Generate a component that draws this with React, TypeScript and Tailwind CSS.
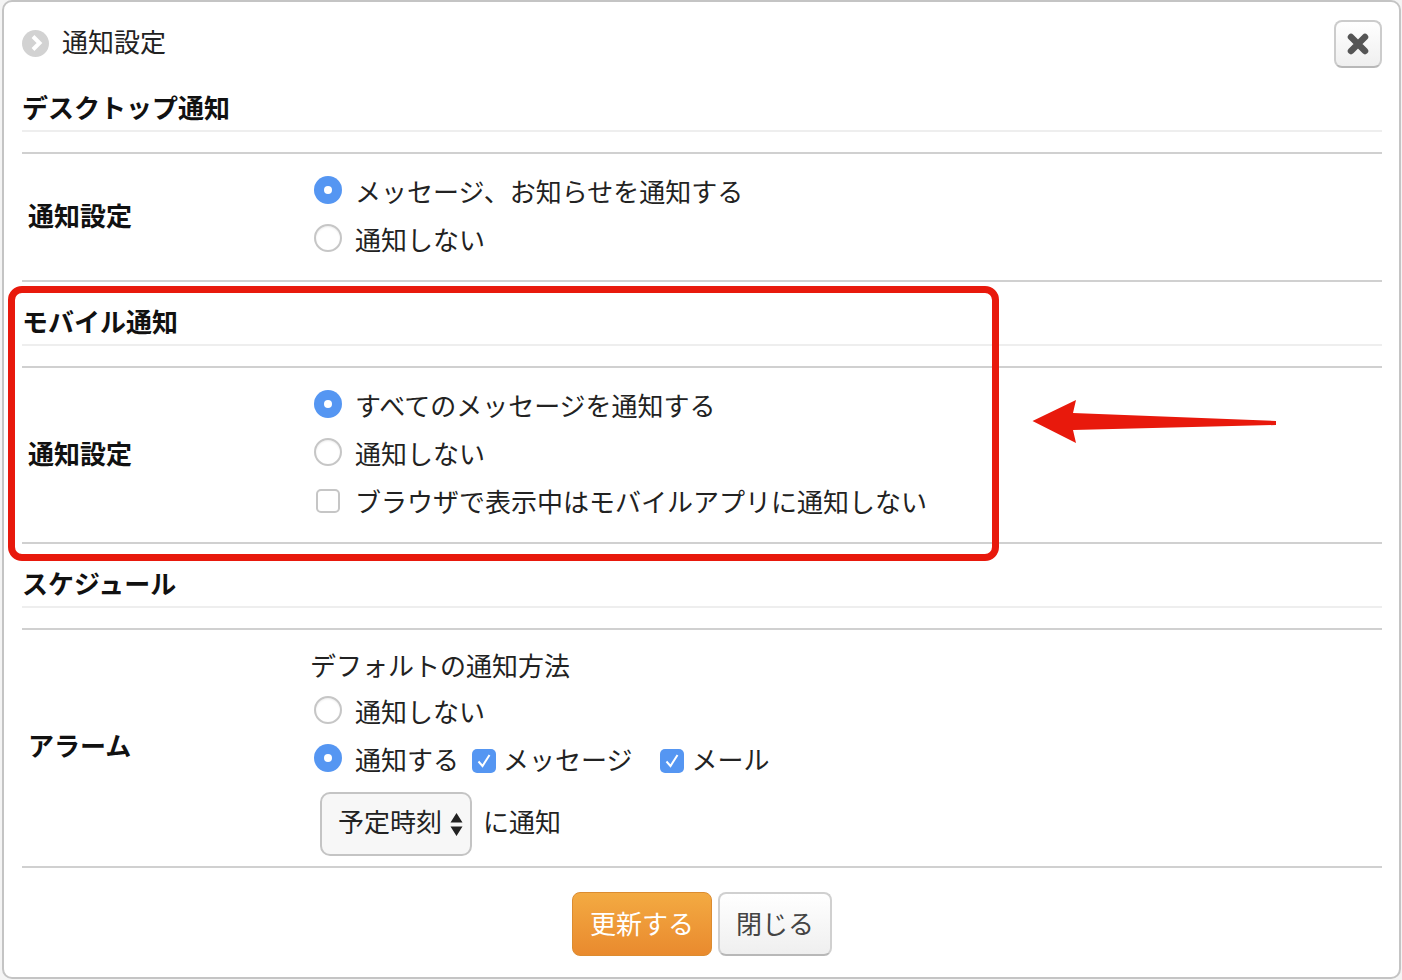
import React from 'react';

const Radio = ({ checked }: { checked?: boolean }) => (
  <span
    className={`flex h-[28px] w-[28px] shrink-0 -translate-y-[1px] items-center justify-center rounded-full ${
      checked
        ? 'bg-[#5596f2]'
        : 'border-2 border-[#c6c6c6] bg-white shadow-[inset_0_1px_2px_rgba(0,0,0,0.08)]'
    }`}
  >
    {checked && <span className="h-[8px] w-[8px] rounded-full bg-white" />}
  </span>
);

const Checkbox = ({ checked }: { checked?: boolean }) => (
  <span
    className={`flex h-[24px] w-[24px] shrink-0 items-center justify-center rounded-[5px] ${
      checked ? 'bg-[#5596f2]' : 'border-2 border-[#c6c6c6] bg-white'
    }`}
  >
    {checked && (
      <svg width="18" height="18" viewBox="0 0 18 18" fill="none">
        <path d="M3.5 9.5 L7.5 14 L14.5 3" stroke="white" strokeWidth="2" />
      </svg>
    )}
  </span>
);

const RadioRow = ({ label, checked }: { label: string; checked?: boolean }) => (
  <div className="flex h-[48px] items-center pb-[2px] pl-[4px]">
    <Radio checked={checked} />
    <span className="ml-[13px]">{label}</span>
  </div>
);

const Heading = ({ children }: { children: React.ReactNode }) => (
  <div className="flex h-[64px] items-end border-b-2 border-[#eeeeee] pb-[5px] text-[26px] leading-[36px] font-bold text-[#111]">
    {children}
  </div>
);

const Row = ({
  label,
  height,
  labelPad = 'pb-[4px]',
  children,
}: {
  label: string;
  height: string;
  labelPad?: string;
  children: React.ReactNode;
}) => (
  <div className={`mt-[20px] flex border-y-2 border-[#d0d0d0] ${height}`}>
    <div className={`flex w-[288px] shrink-0 items-center pl-[6px] font-bold text-[#111] ${labelPad}`}>{label}</div>
    <div className="pt-[14px]">{children}</div>
  </div>
);

export default function App() {
  return (
    <div className="relative h-[980px] w-[1402px] overflow-hidden bg-[#f4f4f4] text-[26px] leading-[36px] text-[#222] [font-family:'Noto_Sans_CJK_JP','Liberation_Sans',sans-serif]">
      <div className="ml-[2px] h-[979px] w-[1399px] rounded-[10px] border-2 border-[#c4c4c4] bg-white pl-[18px] pr-[17px]">
        {/* Title */}
        <div className="flex h-[66px] items-start justify-between pt-[18px]">
          <div className="flex h-[44px] items-center">
            <span className="mt-[2px] flex h-[27px] w-[27px] items-center justify-center rounded-full bg-[#d2d2d2]">
              <svg width="16" height="18" viewBox="0 0 16 18" fill="none">
                <path d="M5 2.5 L11.5 9 L5 15.5" stroke="white" strokeWidth="4" />
              </svg>
            </span>
            <span className="mb-[3px] ml-[13px]">通知設定</span>
          </div>
          <button className="flex h-[48px] w-[48px] items-center justify-center rounded-[8px] border-2 border-[#cccccc] border-b-[#b8b8b8] bg-gradient-to-b from-white to-[#efefef]">
            <svg width="22" height="22" viewBox="0 0 22 22" fill="none">
              <path d="M4 4 L18 18 M18 4 L4 18" stroke="#555555" strokeWidth="6.5" strokeLinecap="round" />
            </svg>
          </button>
        </div>

        <Heading>デスクトップ通知</Heading>
        <Row label="通知設定" height="h-[130px]">
          <RadioRow label="メッセージ、お知らせを通知する" checked />
          <RadioRow label="通知しない" />
        </Row>

        <Heading>モバイル通知</Heading>
        <Row label="通知設定" height="h-[178px]">
          <RadioRow label="すべてのメッセージを通知する" checked />
          <RadioRow label="通知しない" />
          <div className="flex h-[48px] items-center pb-[2px] pl-[6px]">
            <Checkbox />
            <span className="ml-[15px]">ブラウザで表示中はモバイルアプリに通知しない</span>
          </div>
        </Row>

        <Heading>スケジュール</Heading>
        <Row label="アラーム" height="h-[240px]" labelPad="pb-[6px]">
          <div className="flex h-[44px] items-center pb-[2px]">デフォルトの通知方法</div>
          <RadioRow label="通知しない" />
          <div className="flex h-[48px] items-center pb-[2px] pl-[4px]">
            <Radio checked />
            <span className="ml-[13px]">通知する</span>
            <span className="ml-[13px] mt-[3px]"><Checkbox checked /></span>
            <span className="ml-[7px]">メッセージ</span>
            <span className="ml-[27px] mt-[3px]"><Checkbox checked /></span>
            <span className="ml-[8px]">メール</span>
          </div>
          <div className="mt-[8px] flex items-center pl-[10px]">
            <div className="flex h-[64px] w-[152px] items-center rounded-[10px] border-2 border-[#c4c4c4] bg-[#f7f7f7] pl-[16px]">
              <span className="mb-[7px]">予定時刻</span>
              <svg className="ml-[8px]" width="13" height="25" viewBox="0 0 13 25" fill="#222222">
                <path d="M6.5 1 L12.5 10.5 L0.5 10.5 Z M0.5 14.5 L12.5 14.5 L6.5 24 Z" />
              </svg>
            </div>
            <span className="mb-[7px] ml-[11px]">に通知</span>
          </div>
        </Row>

        {/* Footer buttons */}
        <div className="flex justify-center gap-[6px] pt-[24px]">
          <button className="h-[64px] w-[140px] rounded-[8px] border border-[#dc8c30] bg-gradient-to-b from-[#f3aa42] to-[#e98a2e] pb-[3px] text-white">
            更新する
          </button>
          <button className="h-[64px] w-[114px] rounded-[8px] border-2 border-[#d0d0d0] border-b-[#b8b8b8] bg-gradient-to-b from-white to-[#efefef] pb-[3px] text-[#444]">
            閉じる
          </button>
        </div>
      </div>

      {/* Red annotation over the screenshot */}
      <div className="pointer-events-none absolute left-[8px] top-[286px] h-[275px] w-[991px] rounded-[14px] border-[7px] border-[#e8190c]" />
      <svg className="pointer-events-none absolute left-[1030px] top-[398px]" width="248" height="47" viewBox="0 0 248 47">
        <path d="M2.5 23 L46 2 L43 15 L246 23 L246 27 L43 32 L46 45 Z" fill="#e8190c" />
      </svg>
    </div>
  );
}
